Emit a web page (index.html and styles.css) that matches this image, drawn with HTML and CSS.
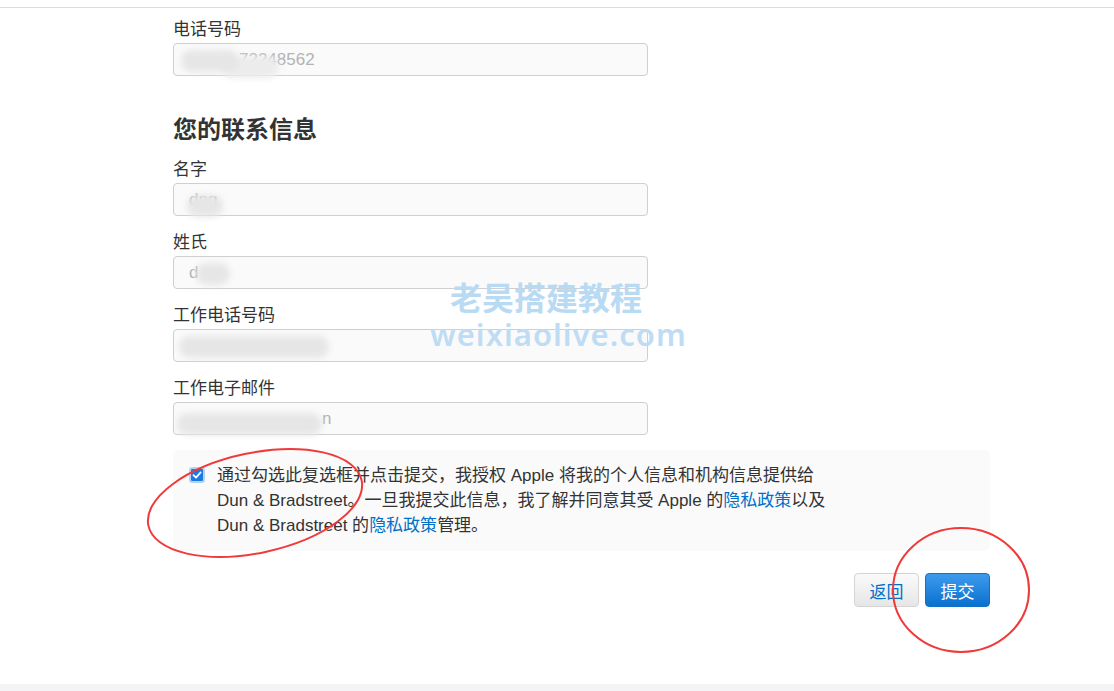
FILE: index.html
```html
<!DOCTYPE html>
<html lang="zh-CN">
<head>
    <meta charset="UTF-8">
    <title>您的联系信息</title>
    <link rel="stylesheet" href="styles.css">
</head>
<body>
    <div class="top-bar"></div>

    <div class="form-wrap">
        <div class="field first">
            <div class="field-label">电话号码</div>
            <div class="field-input"><span class="blur blur-phone"></span>72248562</div>
        </div>

        <h2 class="section-title">您的联系信息</h2>

        <div class="field">
            <div class="field-label">名字</div>
            <div class="field-input">dng<span class="blur blur-name"></span></div>
        </div>
        <div class="field">
            <div class="field-label">姓氏</div>
            <div class="field-input">d<span class="blur blur-last"></span></div>
        </div>
        <div class="field">
            <div class="field-label">工作电话号码</div>
            <div class="field-input"><span class="blur blur-work"></span></div>
        </div>
        <div class="field">
            <div class="field-label">工作电子邮件</div>
            <div class="field-input"><span class="blur blur-mail"></span>n</div>
        </div>

        <div class="consent">
            <span class="check">
                <svg width="12" height="12" viewBox="0 0 12 12"><path d="M2.5 6.2 L5 8.6 L9.6 3.4" fill="none" stroke="#fff" stroke-width="1.8" stroke-linecap="round" stroke-linejoin="round"/></svg>
            </span>
            <p class="consent-text">通过勾选此复选框并点击提交，我授权 Apple 将我的个人信息和机构信息提供给<br>Dun &amp; Bradstreet。一旦我提交此信息，我了解并同意其受 Apple 的<a href="#">隐私政策</a>以及<br>Dun &amp; Bradstreet 的<a href="#">隐私政策</a>管理。</p>
        </div>

        <div class="actions">
            <button class="btn btn-back">返回</button>
            <button class="btn btn-submit">提交</button>
        </div>
    </div>

    <div class="bottom-bar"></div>

    <!-- 水印 -->
    <div class="watermark">
        <div class="wm-cn">老吴搭建教程</div>
        <div class="wm-en">weixiaolive.com</div>
    </div>

    <!-- 红圈标注 -->
    <svg class="marks" width="1114" height="691" viewBox="0 0 1114 691">
        <ellipse cx="255" cy="503" rx="109" ry="50" transform="rotate(-12 255 503)" fill="none" stroke="#f03a3a" stroke-width="2"/>
        <ellipse cx="961" cy="590" rx="68" ry="62" fill="none" stroke="#f03a3a" stroke-width="2"/>
    </svg>
</body>
</html>
```

FILE: styles.css
```css
body {
    margin: 0;
    background: #fff;
    color: #333;
    font-family: "Liberation Sans", "Noto Sans CJK SC", sans-serif;
    font-size: 17px;
    overflow: hidden;
    height: 691px;
    position: relative;
}
.top-bar {
    height: 7px;
    border-bottom: 1px solid #dcdcdc;
}
.form-wrap {
    margin-left: 173px;
    width: 817px;
}
.field {
    width: 475px;
    margin-top: 16px;
}
.field.first {
    margin-top: 11px;
}
.field-label {
    line-height: 22px;
    margin-bottom: 2px;
}
.field-input {
    position: relative;
    height: 31px;
    line-height: 31px;
    border: 1px solid #cfcfcf;
    border-radius: 4px;
    background: #fafafa;
    padding-left: 15px;
    color: #b3b3b3;
}
.blur {
    display: inline-block;
    vertical-align: middle;
    height: 22px;
    background: #e6e6e6;
    border-radius: 11px;
    filter: blur(3px);
}
.blur-phone { width: 58px; margin-left: -8px; box-shadow: 40px 6px 0 #ececec; }
.blur-name { width: 36px; margin-left: -30px; margin-top: 10px; }
.blur-last { width: 34px; margin-left: -2px; }
.blur-work { width: 150px; margin-left: -10px; }
.blur-mail { width: 145px; margin-left: -12px; margin-top: 8px; }
.section-title {
    margin: 40px 0 -1px;
    font-size: 24px;
    line-height: 28px;
    font-weight: bold;
    color: #333;
}
.consent {
    margin-top: 15px;
    background: #fafafa;
    border-radius: 5px;
    padding: 13px 16px;
    display: flex;
    gap: 12px;
}
.check {
    flex: none;
    width: 12px;
    height: 12px;
    margin-top: 4px;
    background: #1b7ae2;
    border: 2px solid #b3d4f6;
    border-radius: 3px;
    display: flex;
    align-items: center;
    justify-content: center;
}
.consent-text {
    margin: 0;
    font-size: 17px;
    line-height: 25px;
    color: #333;
}
.consent-text a {
    color: #0070c9;
    text-decoration: none;
}
.actions {
    margin-top: 22px;
    display: flex;
    justify-content: flex-end;
    gap: 6px;
}
.btn {
    width: 65px;
    height: 34px;
    border-radius: 4px;
    font-size: 17px;
    font-family: "Liberation Sans", "Noto Sans CJK SC", sans-serif;
    cursor: pointer;
    padding: 0;
}
.btn-back {
    background: linear-gradient(#fafafa, #e6e6e6);
    border: 1px solid #d4d4d4;
    color: #0070c9;
}
.btn-submit {
    background: linear-gradient(#3d9bee, #0a71cf);
    border: 1px solid #1170c8;
    color: #fff;
}
.bottom-bar {
    position: absolute;
    left: 0;
    bottom: 0;
    width: 100%;
    height: 7px;
    background: #f4f4f6;
}
.watermark {
    position: absolute;
    left: 430px;
    top: 277px;
    pointer-events: none;
    color: #b9daf3;
}
.wm-cn {
    margin-left: 20px;
    font-family: "Noto Sans CJK SC", sans-serif;
    font-weight: bold;
    font-size: 32px;
    line-height: 38px;
}
.wm-en {
    font-family: "Noto Sans", sans-serif;
    font-weight: 600;
    font-size: 31px;
    line-height: 38px;
    letter-spacing: 1px;
    color: #bedcf4;
}
.marks {
    position: absolute;
    left: 0;
    top: 0;
    pointer-events: none;
}
```
